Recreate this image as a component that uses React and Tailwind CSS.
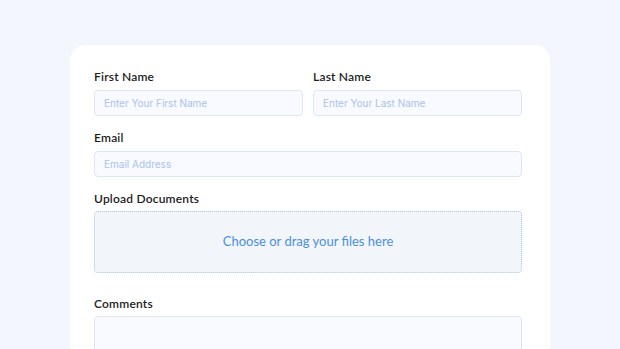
import React from "react";

const inputClass =
  "w-full h-[26px] rounded-[4px] border border-[#dde6f5] bg-[#f8faff] px-[9px] text-[10px] text-gray-700 placeholder:text-[#a9c3ec] focus:outline-none font-['Inter',sans-serif]";

const labelClass =
  "block text-[12px] leading-[16px] font-semibold text-[#1c1c1c] mb-[4px] font-['Lato',sans-serif] tracking-[0.2px]";

const App = () => {
  return (
    <div className="min-h-screen bg-[#f3f6fd] pt-[45px] overflow-hidden">
      <div className="ml-[70px] w-[480px] rounded-t-[16px] bg-white pl-[24px] pr-[28px] pt-[24px] h-[320px]">
        <form>
          <div className="grid grid-cols-2 gap-x-[10px]">
            <div>
              <label className={labelClass}>First Name</label>
              <input type="text" placeholder="Enter Your First Name" className={inputClass} />
            </div>
            <div>
              <label className={labelClass}>Last Name</label>
              <input type="text" placeholder="Enter Your Last Name" className={inputClass} />
            </div>
          </div>
          <div className="mt-[14px]">
            <label className={labelClass}>Email</label>
            <input type="email" placeholder="Email Address" className={inputClass} />
          </div>
          <div className="mt-[14px]">
            <label className={labelClass}>Upload Documents</label>
            <div className="h-[62px] rounded-[4px] border border-dotted border-[#a8c6ec] bg-[#f2f6fb] flex items-center justify-center">
              <span className="text-[13px] text-[#4b8ee0] font-['Lato',sans-serif]">
                Choose or drag your files here
              </span>
            </div>
          </div>
          <div className="mt-[23px]">
            <label className={labelClass}>Comments</label>
            <textarea className="block w-full h-[60px] rounded-[4px] border border-[#dde6f5] bg-[#f8faff] resize-none focus:outline-none" />
          </div>
        </form>
      </div>
    </div>
  );
};

export default App;
